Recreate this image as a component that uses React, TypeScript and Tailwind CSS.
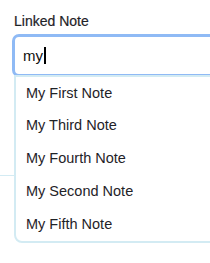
import React from "react";

const notes = ["My First Note", "My Third Note", "My Fourth Note", "My Second Note", "My Fifth Note"];

export default function App() {
  return (
    <div className="w-[210px] h-[263px] overflow-hidden bg-white text-[#1f2328]" style={{ fontFamily: '"Liberation Sans", Arial, sans-serif' }}>
      <div className="pt-[12px] pl-[14px]">
        <div className="text-[14px] leading-[18px] font-medium text-[#1f2328] [-webkit-text-stroke:0.2px_#1f2328]">Linked Note</div>
      </div>
      <div className="relative mt-[4px] ml-[12px] w-[230px]">
        <div className="h-[43px] rounded-[7px] border-[3px] border-[#8fbaf5] bg-white flex items-center pl-[8px]">
          <span className="text-[15px] leading-[18px] text-[#111]">my</span>
          <span className="ml-[1px] w-[2px] h-[17px] bg-black" />
        </div>
        <div className="absolute left-[2px] top-[41px] w-[240px] z-10 bg-white border-2 border-[#d3ebf3] rounded-b-[8px]">
          {notes.map((n) => (
            <div key={n} className="h-[32.8px] flex items-center pl-[10px] text-[14.5px] text-[#1f2328]">
              {n}
            </div>
          ))}
        </div>
      </div>
      <div className="mt-[98px] h-[1px] bg-[#d3ebf3]" />
    </div>
  );
}
